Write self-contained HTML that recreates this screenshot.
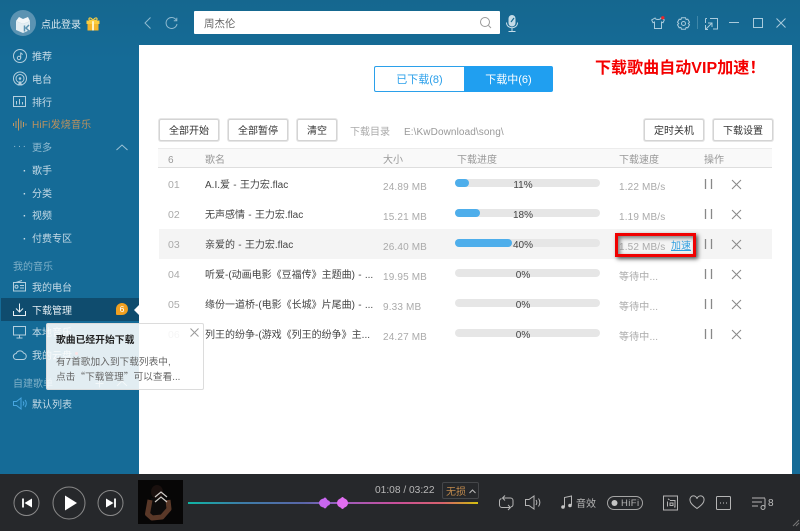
<!DOCTYPE html>
<html><head><meta charset="utf-8">
<style>
html,body{margin:0;padding:0;width:800px;height:531px;overflow:hidden;background:#156a95;font-family:"Liberation Sans","Noto Sans CJK SC",sans-serif;}
#app{position:relative;width:800px;height:531px;overflow:hidden;background:linear-gradient(#15678f,#156b97 60px);}
.t{position:absolute;white-space:nowrap;font-size:10px;line-height:14px;margin-top:4px;}
.b{position:absolute;}
svg.b{overflow:visible;fill:none;}
.nav{color:#c6dbe7;left:32px;}
.btn{position:absolute;top:119px;height:20px;border:1px solid #d4d4d4;border-radius:2px;box-shadow:0 0 0 1px #e6e6e6;background:#fff;color:#333;font-size:10px;line-height:24px;text-align:center;}
.n{left:168px;color:#aaa;font-size:10.5px;margin-top:1px;}
.s{left:205px;color:#444;font-size:10px;width:170px;overflow:hidden;word-spacing:.5px;}
.z{left:383px;color:#aaa;font-size:10px;letter-spacing:.15px;}
.bar{position:absolute;left:455px;width:145px;height:8px;border-radius:4px;background:#e6e6e6;}
.bar i{display:block;height:8px;border-radius:4px;background:#4eaeeb;}
.p{left:490px;width:66px;text-align:center;color:#444;font-size:10px;}
.sp{left:619px;color:#aaa;font-size:10px;letter-spacing:.15px;}
.h{top:152px;color:#999;font-size:10px;margin-top:2px;}
</style></head><body><div id="app">

<!-- top bar -->
<svg class="b" style="left:10px;top:10px" width="28" height="28" viewBox="0 0 28 28"><circle cx="13" cy="13" r="13" fill="#5b93b2"/><path d="M6 11l7 3 7-3v9l-7 3-7-3z" fill="#e4eef3"/><path d="M6 11l3-4 4 2 5-2 2 4-7 3z" fill="#f3f7f9"/><path d="M14.500 15.500v6M19 15l-3 3 3 3" stroke="#5b93b2" stroke-width="1.500"/></svg>
<div class="t" style="left:41px;top:15px;color:#dbe8ef">点此登录</div>
<svg class="b" style="left:86px;top:17px" width="14" height="14" viewBox="0 0 14 14"><rect x="1.500" y="6.500" width="11" height="7" fill="#f5b62a"/><rect x="0.500" y="3.500" width="13" height="3.500" fill="#fbcd3f"/><rect x="6" y="3.500" width="2" height="10" fill="#fff2c4"/><path d="M7 3.500C5 0 2.500 .5 3 2.500 3.300 3.500 5 3.500 7 3.500 9 3.500 10.700 3.500 11 2.500 11.500 .5 9 0 7 3.500z" stroke="#fbcd3f" stroke-width="1.200"/></svg>
<svg class="b" style="left:144px;top:17px" width="8" height="12"><path d="M6.500 .5L1 6l5.500 5.500" stroke="#8fbad0" stroke-width="1"/></svg>
<svg class="b" style="left:165px;top:17px" width="13" height="13"><path d="M11.500 3.500A5.500 5.500 0 1 0 12 7" stroke="#8fbad0" stroke-width="1"/><path d="M11.800 .8v3H8.800" stroke="#8fbad0" stroke-width="1"/></svg>
<div class="b" style="left:194px;top:11px;width:306px;height:23px;background:#fff;border-radius:1px"></div>
<div class="t" style="left:204px;top:13px;color:#666;font-size:10.500px">周杰伦</div>
<svg class="b" style="left:480px;top:17px" width="12" height="12"><circle cx="5" cy="5" r="4.500" stroke="#9a9a9a"/><path d="M8.500 8.500l2.500 2.500" stroke="#9a9a9a"/></svg>
<svg class="b" style="left:505px;top:15px" width="14" height="18"><rect x="3.500" y="0" width="7" height="11.500" rx="3.500" fill="#c5dce8"/><path d="M1.500 7.500c0 7 11 7 11 0M7 13v3M3.500 16.500h7" stroke="#c5dce8"/><path d="M9 3l-3 4" stroke="#15698f" stroke-width="1.200"/></svg>

<svg class="b" style="left:651px;top:16px" width="14" height="13"><path d="M4 2L.7 4l1.300 2.700 1.500-.7V12.500h7V6l1.500.7L13.300 4 10 2C9.500 4 4.500 4 4 2z" stroke="#a9cbdc"/><circle cx="11.800" cy="1.800" r="1.700" fill="#e8262a"/></svg>
<svg class="b" style="left:677px;top:17px" width="13" height="13"><path d="M4.500.8h4l.6 1.700 1.700-.3 1.700 3-1.200 1.300 1.200 1.300-1.700 3-1.700-.3-.6 1.700h-4l-.6-1.700-1.700.3-1.700-3L1.700 6.500.5 5.200l1.700-3 1.700.3z" stroke="#a9cbdc"/><circle cx="6.500" cy="6.500" r="2" stroke="#a9cbdc"/></svg>
<div class="b" style="left:697px;top:16px;width:1px;height:13px;background:#3f87a9"></div>
<svg class="b" style="left:705px;top:17px" width="13" height="13"><path d="M5 1.500h7.500V12H8M.5 1.500h1.500M.5 1.500V6" stroke="#a9cbdc"/><path d="M1 12l6-6M3 6h4v4M.5 8v4.500H3" stroke="#a9cbdc"/></svg>
<div class="b" style="left:729px;top:22px;width:10px;height:1px;background:#a9cbdc"></div>
<div class="b" style="left:753px;top:18px;width:8px;height:8px;border:1px solid #a9cbdc"></div>
<svg class="b" style="left:776px;top:18px" width="10" height="10"><path d="M.5 .5l9 9M9.500 .5l-9 9" stroke="#a9cbdc"/></svg>

<!-- sidebar -->
<svg class="b" style="left:13px;top:47px" width="18" height="18"><circle cx="7" cy="9" r="6.500" stroke="#b3cfde"/><circle cx="6" cy="11" r="1.700" stroke="#b3cfde"/><path d="M7.700 11V5.500c.5 1.500 1.500 1.500 2 2" stroke="#b3cfde"/></svg>
<div class="t nav" style="top:47px">推荐</div>
<svg class="b" style="left:13px;top:71px" width="18" height="16"><circle cx="7" cy="7.500" r="6.500" stroke="#b3cfde"/><circle cx="7" cy="7.500" r="4" stroke="#b3cfde"/><circle cx="7" cy="7.500" r="1.300" fill="#b3cfde"/><path d="M4.500 14.500L7 9.500 9.500 14.500z" fill="#b3cfde"/></svg>
<div class="t nav" style="top:70px">电台</div>
<svg class="b" style="left:13px;top:96px" width="14" height="12"><rect x=".5" y=".5" width="12" height="10" stroke="#b3cfde"/><path d="M3.500 8.500V5M6.500 8.500V3M9.500 8.500V6" stroke="#b3cfde"/></svg>
<div class="t nav" style="top:93px">排行</div>
<svg class="b" style="left:13px;top:118px" width="14" height="13"><path d="M.5 5v3M3 3v7M5.500 .5v12M8 2.500v8M10.500 4v5M13 5.500v2" stroke="#c09662"/></svg>
<div class="t" style="left:32px;top:115px;color:#bd925e;letter-spacing:.2px">HiFi发烧音乐</div>
<div class="t" style="left:13px;top:136px;color:#8fbad0;letter-spacing:1.500px">···</div>
<div class="t" style="left:32px;top:138px;color:#8fbad0">更多</div>
<svg class="b" style="left:116px;top:144px" width="12" height="7"><path d="M.5 6L6 1l5.500 5" stroke="#9cc2d6"/></svg>
<div class="t nav" style="left:23px;top:161px;font-weight:bold">·</div><div class="t nav" style="top:161px">歌手</div>
<div class="t nav" style="left:23px;top:184px;font-weight:bold">·</div><div class="t nav" style="top:184px">分类</div>
<div class="t nav" style="left:23px;top:206px;font-weight:bold">·</div><div class="t nav" style="top:206px">视频</div>
<div class="t nav" style="left:23px;top:229px;font-weight:bold">·</div><div class="t nav" style="top:229px">付费专区</div>
<div class="t" style="left:13px;top:257px;color:#7fb0c8">我的音乐</div>
<svg class="b" style="left:13px;top:280px" width="13" height="12"><rect x=".5" y="2.500" width="12" height="8.500" stroke="#b3cfde"/><circle cx="3.500" cy="6.800" r="1.500" stroke="#b3cfde"/><path d="M7 5.500h4M7 8h4M3 2.500L9 .5" stroke="#b3cfde"/></svg>
<div class="t nav" style="top:278px">我的电台</div>
<div class="b" style="left:1px;top:298px;width:138px;height:23px;background:#0f4c6e"></div>
<svg class="b" style="left:13px;top:303px" width="13" height="13"><path d="M6.500 .5v8M3 5.500l3.500 3.500L10 5.500M.5 8v4.500h12V8" stroke="#e8f0f4"/></svg>
<div class="t" style="left:32px;top:301px;color:#e6eff4">下载管理</div>
<div class="b" style="left:116px;top:303px;width:12px;height:12px;border-radius:6px 6px 6px 1px;background:#f0a020"></div>
<div class="t" style="left:116px;top:298px;width:12px;text-align:center;color:#fff;font-size:8.500px">6</div>
<div class="b" style="left:134px;top:305px;width:0;height:0;border:5px solid transparent;border-left:0;border-right:5px solid #fff"></div>
<svg class="b" style="left:13px;top:326px" width="13" height="13"><rect x=".5" y=".5" width="12" height="8.500" stroke="#b3cfde"/><path d="M6.500 9v3M3.500 12h6" stroke="#b3cfde"/></svg>
<div class="t nav" style="top:323px">本地音乐</div>
<svg class="b" style="left:13px;top:350px" width="14" height="10"><path d="M3.500 9.500a3 3 0 0 1-.3-6A4 4 0 0 1 10.500 3a3.300 3.300 0 0 1 0 6.500z" stroke="#b3cfde"/></svg>
<div class="t nav" style="top:346px">我的云盘</div>
<div class="b" style="left:75px;top:352px;width:3px;height:3px;border-radius:50%;background:#e8262a"></div>
<div class="t" style="left:13px;top:374px;color:#7fb0c8">自建歌单</div>
<svg class="b" style="left:95px;top:379px" width="32" height="9"><path d="M4.500 .5v8M.5 4.500h8M22 7l5-5 5 5" stroke="#9cc2d6"/></svg>
<svg class="b" style="left:13px;top:397px" width="14" height="13"><path d="M.5 4.500h3L8 1v11L3.500 8.500h-3z" stroke="#47a6e0"/><path d="M10 4.500c1 1.200 1 2.800 0 4M12 3c1.700 2 1.700 5 0 7" stroke="#47a6e0"/></svg>
<div class="t nav" style="top:395px">默认列表</div>

<!-- content -->
<div class="b" style="left:139px;top:45px;width:653px;height:429px;background:#fff"></div>

<!-- tabs -->
<div class="b" style="left:374px;top:66px;width:89px;height:24px;border:1px solid #2ba0ea;border-right:0;border-radius:2px 0 0 2px;background:#fff;color:#2a9fea;font-size:11px;line-height:26px;text-align:center">已下载(8)</div>
<div class="b" style="left:464px;top:66px;width:89px;height:26px;background:#209ff0;border-radius:0 2px 2px 0;color:#fff;font-size:11px;line-height:28px;text-align:center">下载中(6)</div>
<div class="t" style="left:595px;top:55px;color:#f40000;font-size:16px;line-height:20px;font-weight:bold;letter-spacing:.05px">下载歌曲自动VIP加速！</div>

<!-- toolbar -->
<div class="btn" style="left:159px;width:58px">全部开始</div>
<div class="btn" style="left:228px;width:58px">全部暂停</div>
<div class="btn" style="left:297px;width:38px">清空</div>
<div class="t" style="left:350px;top:122px;color:#aaa">下载目录</div>
<div class="t" style="left:404px;top:122px;color:#999;letter-spacing:.1px">E:\KwDownload\song\</div>
<div class="btn" style="left:644px;width:58px">定时关机</div>
<div class="btn" style="left:713px;width:58px">下载设置</div>

<!-- header -->
<div class="b" style="left:158px;top:148px;width:614px;height:18px;background:#f9f9f9;border-top:1px solid #ececec;border-bottom:1px solid #dedede"></div>
<div class="t h" style="left:168px">6</div>
<div class="t h" style="left:205px">歌名</div>
<div class="t h" style="left:383px">大小</div>
<div class="t h" style="left:457px">下载进度</div>
<div class="t h" style="left:619px">下载速度</div>
<div class="t h" style="left:704px">操作</div>

<div class="b" style="left:159px;top:229px;width:613px;height:30px;background:#f4f4f4"></div>

<!-- rows -->
<div class="t n" style="top:177px">01</div><div class="t s" style="top:175px">A.I.爱 - 王力宏.flac</div><div class="t z" style="top:177px">24.89 MB</div>
<div class="bar" style="top:179px"><i style="width:14px"></i></div><div class="t p" style="top:175px">11%</div><div class="t sp" style="top:177px">1.22 MB/s</div>
<div class="t n" style="top:207px">02</div><div class="t s" style="top:205px">无声感情 - 王力宏.flac</div><div class="t z" style="top:207px">15.21 MB</div>
<div class="bar" style="top:209px"><i style="width:25px"></i></div><div class="t p" style="top:205px">18%</div><div class="t sp" style="top:207px">1.19 MB/s</div>
<div class="t n" style="top:237px">03</div><div class="t s" style="top:235px">亲爱的 - 王力宏.flac</div><div class="t z" style="top:237px">26.40 MB</div>
<div class="bar" style="top:239px"><i style="width:57px"></i></div><div class="t p" style="top:235px">40%</div><div class="t sp" style="top:237px">1.52 MB/s</div>
<div class="t n" style="top:267px">04</div><div class="t s" style="top:265px">听爱-(动画电影《豆福传》主题曲) - ...</div><div class="t z" style="top:267px">19.95 MB</div>
<div class="bar" style="top:269px"></div><div class="t p" style="top:265px">0%</div><div class="t sp" style="top:267px">等待中...</div>
<div class="t n" style="top:297px">05</div><div class="t s" style="top:295px">缘份一道桥-(电影《长城》片尾曲) - ...</div><div class="t z" style="top:297px">9.33 MB</div>
<div class="bar" style="top:299px"></div><div class="t p" style="top:295px">0%</div><div class="t sp" style="top:297px">等待中...</div>
<div class="t n" style="top:327px">06</div><div class="t s" style="top:325px">列王的纷争-(游戏《列王的纷争》主...</div><div class="t z" style="top:327px">24.27 MB</div>
<div class="bar" style="top:329px"></div><div class="t p" style="top:325px">0%</div><div class="t sp" style="top:327px">等待中...</div>

<svg class="b" style="left:0;top:0" width="800" height="531"><g stroke="#888"><path stroke-width="1.300" d="M705.500 179v10M711.500 179v10M705.500 209v10M711.500 209v10M705.500 239v10M711.500 239v10M705.500 269v10M711.500 269v10M705.500 299v10M711.500 299v10M705.500 329v10M711.500 329v10"/><path d="M732 180l9 9M741 180l-9 9M732 210l9 9M741 210l-9 9M732 240l9 9M741 240l-9 9M732 270l9 9M741 270l-9 9M732 300l9 9M741 300l-9 9M732 330l9 9M741 330l-9 9"/></g></svg>

<!-- highlight -->
<div class="t" style="left:671px;top:236px;color:#2f9fe0;text-decoration:underline">加速</div>
<div class="b" style="left:615px;top:233px;width:75px;height:18px;border:3px solid #f00000;box-shadow:2px 2px 4px #555,inset 2px 2px 4px #777"></div>

<!-- tooltip -->
<div class="b" style="left:46px;top:323px;width:156px;height:65px;background:rgba(255,255,255,.88);border:1px solid #dcdcdc;border-radius:2px"></div>
<div class="t" style="left:56px;top:330px;color:#222;font-weight:bold;font-size:9.800px">歌曲已经开始下载</div>
<div class="t" style="left:56px;top:352px;color:#666;font-size:9.700px">有7首歌加入到下载列表中,</div>
<div class="t" style="left:56px;top:365px;color:#666;font-size:9.700px">点击<span style="font-family:'Noto Sans CJK SC',sans-serif">“</span>下载管理<span style="font-family:'Noto Sans CJK SC',sans-serif">”</span>可以查看...</div>
<svg class="b" style="left:190px;top:328px" width="10" height="10"><path d="M.5 .5l8 8M8.500 .5l-8 8" stroke="#999"/></svg>

<!-- player -->
<div class="b" style="left:0;top:474px;width:800px;height:57px;background:#26282b"></div>
<svg class="b" style="left:0;top:474px" width="800" height="57">
<circle cx="26.500" cy="29" r="12.500" stroke="#8a8a8a"/>
<path d="M23 24.500v9" stroke="#fff" stroke-width="1.800"/><path d="M32 24.500v9L24.500 29z" fill="#fff"/>
<circle cx="69" cy="29" r="16" stroke="#8a8a8a"/>
<path d="M65 21.500v15L77 29z" fill="#fff"/>
<circle cx="110.500" cy="29" r="12.500" stroke="#8a8a8a"/>
<path d="M106 24.500v9L113.500 29z" fill="#fff"/><path d="M115 24.500v9" stroke="#fff" stroke-width="1.800"/>
</svg>
<div class="b" style="left:138px;top:480px;width:45px;height:44px;background:#070606"></div>
<svg class="b" style="left:138px;top:480px" width="45" height="44"><ellipse cx="19" cy="12" rx="6" ry="7" fill="#1a100e"/><path d="M13 18h14l3 12-4 9H12z" fill="#0d0b0b"/><path d="M12 20L9.500 34 14 38 24 37 31 29 30 20" stroke="#5a3828" stroke-width="5" stroke-linejoin="round"/><path d="M17 17l6-5 6 5M17 22l6-5 6 5" stroke="#cfcbc7" stroke-width="1.200"/></svg>
<div class="b" style="left:188px;top:502px;width:290px;height:2px;background:linear-gradient(90deg,#0fb5a5 0%,#3c7ea8 18%,#5a66a8 40%,#9a5ec0 52%,#c94f9a 72%,#d7636c 88%,#cfa02a 96%,#d4c010 100%)"></div>
<svg class="b" style="left:315px;top:494px" width="40" height="18"><ellipse cx="9" cy="9" rx="5" ry="4.500" fill="#c967f0"/><ellipse cx="10" cy="9" rx="2.500" ry="5.500" fill="#c967f0"/><ellipse cx="13.500" cy="9" rx="1.500" ry="2.500" fill="#c967f0"/><ellipse cx="27.500" cy="9" rx="5.500" ry="5" fill="#e06ef0"/><ellipse cx="27.500" cy="9" rx="2.500" ry="6" fill="#e06ef0"/></svg>
<div class="t" style="left:375px;top:480px;color:#b8b8b8;font-size:10.200px">01:08 / 03:22</div>
<div class="b" style="left:442px;top:482px;width:35px;height:15px;border:1px solid #45474a;border-radius:2px"></div>
<div class="t" style="left:446px;top:482px;color:#c08a4d">无损</div>
<svg class="b" style="left:469px;top:489px" width="7" height="5"><path d="M.5 4L3.500 1l3 3" stroke="#bbb"/></svg>

<svg class="b" style="left:0;top:474px" width="800" height="57">
<g stroke="#b5b5b5">
<path d="M503 24h7.500a2.500 2.500 0 0 1 2.500 2.500v4a2.500 2.500 0 0 1-2 2.400"/>
<path d="M510 33.500h-8a2.500 2.500 0 0 1-2.500-2.500v-4a2.500 2.500 0 0 1 2-2.400"/>
<path d="M505 21.500l-2.500 2.500 2.500 2.500M508 31l2.500 2.500-2.500 2.500"/>
<path d="M525.500 25.500h3.500l5-3.500v13l-5-3.500h-3.500z"/><path d="M536 26c1 1.500 1 3.500 0 5M538.500 24.500c1.700 2.500 1.700 5.500 0 8"/>
<path d="M564.500 33V23.500l7-1.500V31"/>
</g>
<circle cx="563" cy="33" r="1.800" fill="#c5c5c5"/><circle cx="570" cy="31.500" r="1.800" fill="#c5c5c5"/>
<rect x="607.500" y="22.500" width="35" height="13" rx="6.500" stroke="#a5a5a5"/><circle cx="614.500" cy="29" r="3" fill="#c5c5c5"/>
<g stroke="#b5b5b5">
<rect x="663.500" y="22" width="14" height="14"/><path d="M668 24.800l1.500 1.200M667.500 27.500v5M670 26.500h5v6.500h-1M670 29h3v2.500h-3z"/>
<path d="M697 34.500c-4-3-7-5.500-7-8.500a3.500 3.500 0 0 1 7-1.200 3.500 3.500 0 0 1 7 1.200c0 3-3 5.500-7 8.500z"/>
<rect x="716.500" y="22.500" width="14" height="13" rx="1"/>
<path d="M752 24h13M752 28h10M752 32h6M765 24.500v9"/>
<circle cx="763" cy="33.500" r="2"/>
<path d="M793 52l6-6M796 52l3-3" stroke="#777"/>
</g>
<path d="M720 29h1M723 29h1M726 29h1" stroke="#ccc"/>
</svg>
<div class="t" style="left:576px;top:494px;color:#b5b5b5">音效</div>
<div class="t" style="left:621px;top:493px;color:#b5b5b5;font-size:9.500px;letter-spacing:.4px">HiFi</div>
<div class="t" style="left:768px;top:493px;color:#c0c0c0;font-size:10px">8</div>
</div></body></html>
